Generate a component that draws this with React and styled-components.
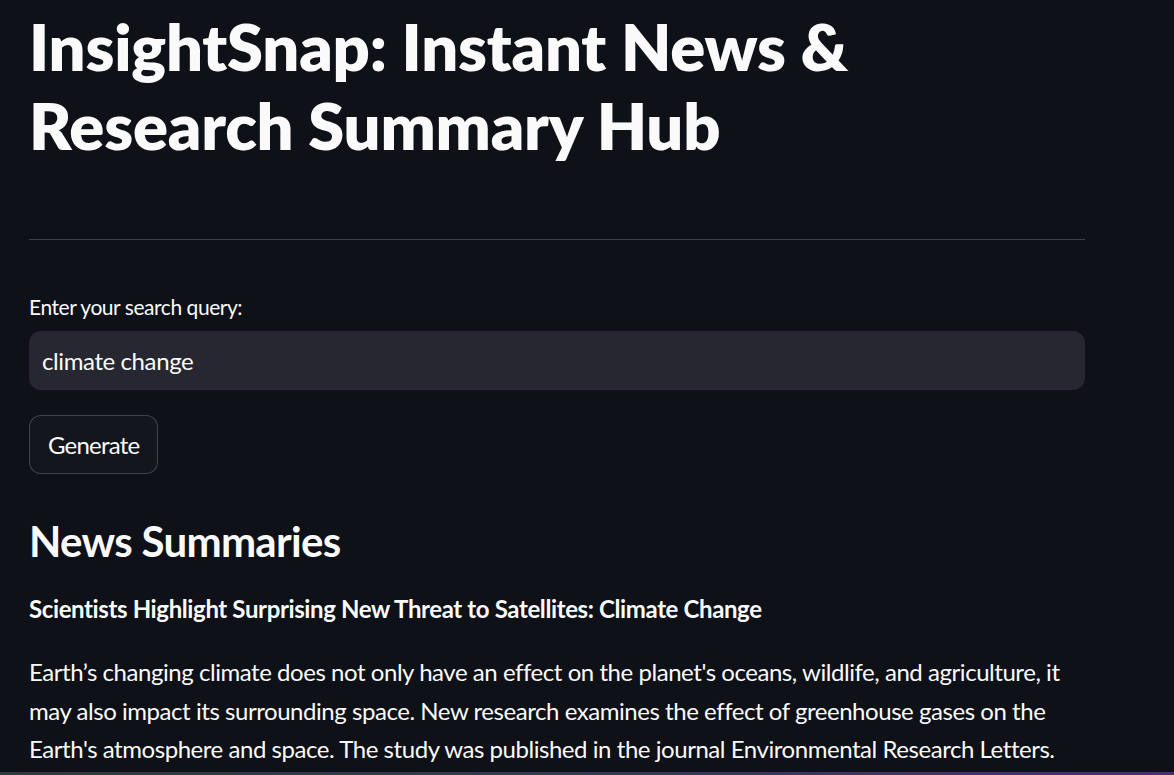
import React from 'react';
import styled, {createGlobalStyle} from 'styled-components';

const GlobalStyle = createGlobalStyle`
  html, body {
    margin: 0;
    padding: 0;
    background: #0e1117;
    height: 100%;
    overflow: hidden;
  }
  body {
    font-family: Lato, "Noto Sans", sans-serif;
    color: #fafafa;
  }
`

const Page = styled.main`
  padding: 7px 0 0 29px;
  width: 1056px;
`

const Title = styled.h1`
  margin: 0;
  font-size: 65px;
  line-height: 79px;
  font-weight: 800;
  letter-spacing: -0.2px;
  color: #fafafa;
`

const Divider = styled.hr`
  margin: 74px 0 0 0;
  border: none;
  height: 1px;
  background: rgba(250, 250, 250, 0.2);
`

const Field = styled.div`
  display: flex;
  flex-direction: column;
  margin-top: 52px;
`

const Label = styled.label`
  font-size: 21px;
  line-height: 1.4;
  letter-spacing: -0.45px;
  margin-bottom: 10px;
  color: #fafafa;
`

const Input = styled.input`
  box-sizing: border-box;
  height: 59px;
  width: 100%;
  border: none;
  border-radius: 12px;
  background: #262730;
  color: #fafafa;
  font-family: inherit;
  font-size: 24px;
  letter-spacing: -0.4px;
  padding: 0 13px;
  outline: none;
`

const Button = styled.button`
  box-sizing: border-box;
  margin-top: 25px;
  height: 59px;
  padding: 0 18px;
  border: 1px solid rgba(250, 250, 250, 0.2);
  border-radius: 12px;
  background: #13161d;
  color: #fafafa;
  font-family: inherit;
  font-size: 24px;
  letter-spacing: -0.8px;
  align-self: flex-start;
`

const Section = styled.h3`
  margin: 42px 0 0 0;
  font-size: 42px;
  line-height: 1.2;
  font-weight: 700;
  letter-spacing: -0.7px;
`

const ArticleTitle = styled.p`
  margin: 23px 0 0 0;
  font-size: 24px;
  font-weight: 700;
  letter-spacing: -0.38px;
  line-height: 1.6;
`

const Body = styled.p`
  margin: 25px 0 0 0;
  font-size: 24px;
  line-height: 38.5px;
  letter-spacing: -0.45px;
  white-space: nowrap;
`

const BottomBar = styled.div`
  position: fixed;
  left: 0;
  right: 0;
  bottom: 0;
  height: 3px;
  background: linear-gradient(90deg, #2e3b3c 0%, #333a55 50%, #4b2d74 100%);
`

export default function App() {
  return (
    <>
      <GlobalStyle />
      <Page>
        <Title>InsightSnap: Instant News &amp;<br />Research Summary Hub</Title>
        <Divider />
        <Field>
          <Label>Enter your search query:</Label>
          <Input defaultValue="climate change" />
          <Button>Generate</Button>
        </Field>
        <Section>News Summaries</Section>
        <ArticleTitle>Scientists Highlight Surprising New Threat to Satellites: Climate Change</ArticleTitle>
        <Body>
          Earth’s changing climate does not only have an effect on the planet's oceans, wildlife, and agriculture, it<br />
          may also impact its surrounding space. New research examines the effect of greenhouse gases on the<br />
          Earth's atmosphere and space. The study was published in the journal Environmental Research Letters.
        </Body>
      </Page>
      <BottomBar />
    </>
  );
}
